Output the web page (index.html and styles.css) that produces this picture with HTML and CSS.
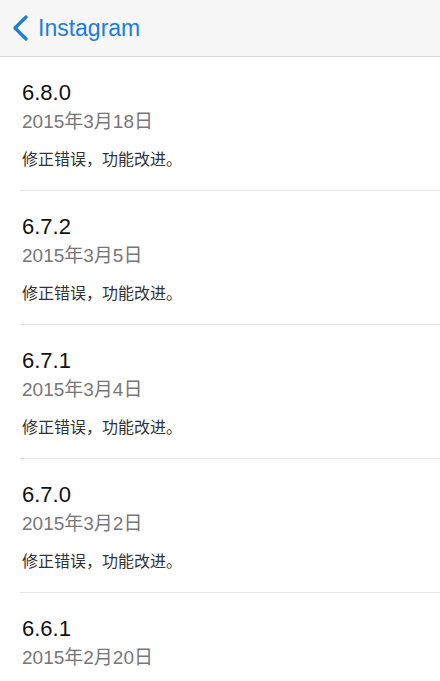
FILE: index.html
```html
<!DOCTYPE html>
<html lang="zh-CN">
<head>
    <meta charset="UTF-8">
    <meta name="viewport" content="width=device-width, initial-scale=1.0">
    <title>Instagram 版本历史</title>
    <link rel="stylesheet" href="styles.css">
</head>
<body>
   <header class="nav">
       <a class="back" href="#">
           <svg class="chevron" width="18" height="26" viewBox="0 0 18 26">
               <path d="M15 2 L4 13 L15 24" fill="none" stroke="#1b7de0" stroke-width="3.2" stroke-linecap="round" stroke-linejoin="round"/>
           </svg>
           <span>Instagram</span>
       </a>
   </header>
   <ul class="releases">
       <li class="release">
           <h2 class="version">6.8.0</h2>
           <p class="date">2015年3月18日</p>
           <p class="notes">修正错误，功能改进。</p>
       </li>
       <li class="release">
           <h2 class="version">6.7.2</h2>
           <p class="date">2015年3月5日</p>
           <p class="notes">修正错误，功能改进。</p>
       </li>
       <li class="release">
           <h2 class="version">6.7.1</h2>
           <p class="date">2015年3月4日</p>
           <p class="notes">修正错误，功能改进。</p>
       </li>
       <li class="release">
           <h2 class="version">6.7.0</h2>
           <p class="date">2015年3月2日</p>
           <p class="notes">修正错误，功能改进。</p>
       </li>
       <li class="release">
           <h2 class="version">6.6.1</h2>
           <p class="date">2015年2月20日</p>
       </li>
   </ul>
</body>
</html>
```

FILE: styles.css
```css
body{
    margin:0;
    background-color:#fff;
    font-family:"Liberation Sans", "Noto Sans CJK SC", sans-serif;
    overflow:hidden;
}
.nav{
    height:56px;
    background-color:#f7f7f7;
    border-bottom:1px solid #d9d9d9;
    display:flex;
    align-items:center;
}
.back{
    display:flex;
    align-items:center;
    gap:9px;
    padding-left:11px;
    color:#1b7de0;
    font-size:23px;
    text-decoration:none;
}
.chevron{
    display:block;
}
.releases{
    list-style:none;
    margin:0;
    padding:0;
}
.release{
    margin-left:20px;
    padding:23px 0 20px 2px;
    border-bottom:1px solid #e4e4e4;
}
.release:last-child{
    border-bottom:none;
    padding-bottom:0;
}
.version{
    margin:0;
    font-size:22px;
    line-height:26px;
    font-weight:normal;
    color:#111;
}
.date{
    margin:5px 0 0;
    font-size:19px;
    line-height:22px;
    color:#777;
}
.notes{
    margin:17px 0 0;
    font-size:16px;
    line-height:20px;
    color:#333;
}
```
